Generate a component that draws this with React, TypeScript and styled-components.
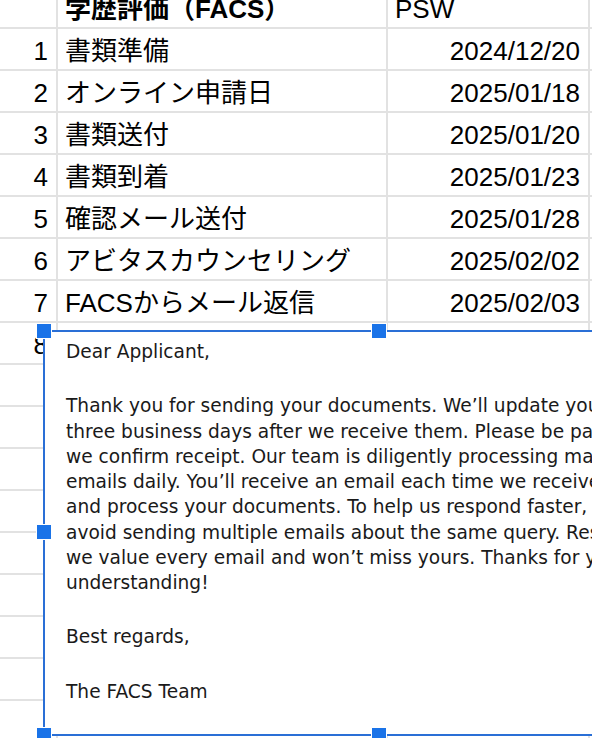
import React from "react";
import styled, { createGlobalStyle } from "styled-components";

const GlobalStyle = createGlobalStyle`
  html, body {
    margin: 0;
    padding: 0;
    width: 592px;
    height: 738px;
    overflow: hidden;
    background: #ffffff;
  }
  #root {
    position: relative;
    width: 592px;
    height: 738px;
    overflow: hidden;
  }
`;

const GRID = "#e2e2e2";

const Page = styled.div`
  position: relative;
  width: 592px;
  height: 738px;
  overflow: hidden;
  background: #fff;
`;

const Sheet = styled.div`
  display: flex;
  flex-direction: column;
  margin-top: -13px;
`;

const Row = styled.div`
  display: grid;
  grid-template-columns: 58px 330px 202px 200px;
  height: 42px;
`;

const Cell = styled.div<{ $align?: "left" | "right"; $bold?: boolean }>`
  display: flex;
  align-items: flex-end;
  justify-content: ${(p) => (p.$align === "right" ? "flex-end" : "flex-start")};
  box-sizing: border-box;
  border-right: 2px solid ${GRID};
  border-bottom: 2px solid ${GRID};
  padding: 0 8px 5px 7px;
  font-family: "Liberation Sans", Arial, "Noto Sans CJK JP", sans-serif;
  font-size: 26px;
  line-height: 26px;
  font-weight: ${(p) => (p.$bold ? 700 : 400)};
  color: #000;
  white-space: nowrap;
  overflow: hidden;
`;

const TextBox = styled.div`
  position: absolute;
  left: 43px;
  top: 330px;
  width: 672px;
  height: 406px;
  box-sizing: border-box;
  border: 2px solid #2a6fd6;
  background: #fff;
  padding: 7px 0 0 21px;
  font-family: "DejaVu Sans", Verdana, sans-serif;
  font-size: 18.6px;
  line-height: 25.25px;
  color: #1a1a1a;
  display: flex;
  flex-direction: column;
  gap: 29px;
`;

const Block = styled.div`
  white-space: nowrap;
`;

const Handle = styled.div<{ $x: number; $y: number }>`
  position: absolute;
  left: ${(p) => p.$x - 7}px;
  top: ${(p) => p.$y - 7}px;
  width: 14px;
  height: 14px;
  background: #1a73e8;
  box-shadow: 0 0 0 1px #ffffff;
`;

const rows: [string, string, string][] = [
  ["1", "書類準備", "2024/12/20"],
  ["2", "オンライン申請日", "2025/01/18"],
  ["3", "書類送付", "2025/01/20"],
  ["4", "書類到着", "2025/01/23"],
  ["5", "確認メール送付", "2025/01/28"],
  ["6", "アビタスカウンセリング", "2025/02/02"],
  ["7", "FACSからメール返信", "2025/02/03"],
  ["8", "", ""],
];

const emptyRows = Array.from({ length: 10 }, (_, i) => i);

export default function App() {
  return (
    <Page>
      <GlobalStyle />
      <Sheet>
        <Row>
          <Cell $align="right" />
          <Cell $bold>学歴評価（FACS）</Cell>
          <Cell>PSW</Cell>
          <Cell />
        </Row>
        {rows.map(([n, label, date]) => (
          <Row key={n}>
            <Cell $align="right">{n}</Cell>
            <Cell>{label}</Cell>
            <Cell $align="right">{date}</Cell>
            <Cell />
          </Row>
        ))}
        {emptyRows.map((i) => (
          <Row key={`e${i}`}>
            <Cell />
            <Cell />
            <Cell />
            <Cell />
          </Row>
        ))}
      </Sheet>

      <TextBox>
        <Block>Dear Applicant,</Block>
        <Block>
          Thank you for sending your documents. We’ll update your status within
          <br />
          three business days after we receive them. Please be patient until
          <br />
          we confirm receipt. Our team is diligently processing many
          <br />
          emails daily. You’ll receive an email each time we receive
          <br />
          and process your documents. To help us respond faster, please
          <br />
          avoid sending multiple emails about the same query. Rest assured,
          <br />
          we value every email and won’t miss yours. Thanks for your
          <br />
          understanding!
        </Block>
        <Block>Best regards,</Block>
        <Block>The FACS Team</Block>
      </TextBox>

      <Handle $x={44} $y={331} />
      <Handle $x={379} $y={331} />
      <Handle $x={44} $y={532} />
      <Handle $x={44} $y={735} />
      <Handle $x={379} $y={735} />
    </Page>
  );
}
